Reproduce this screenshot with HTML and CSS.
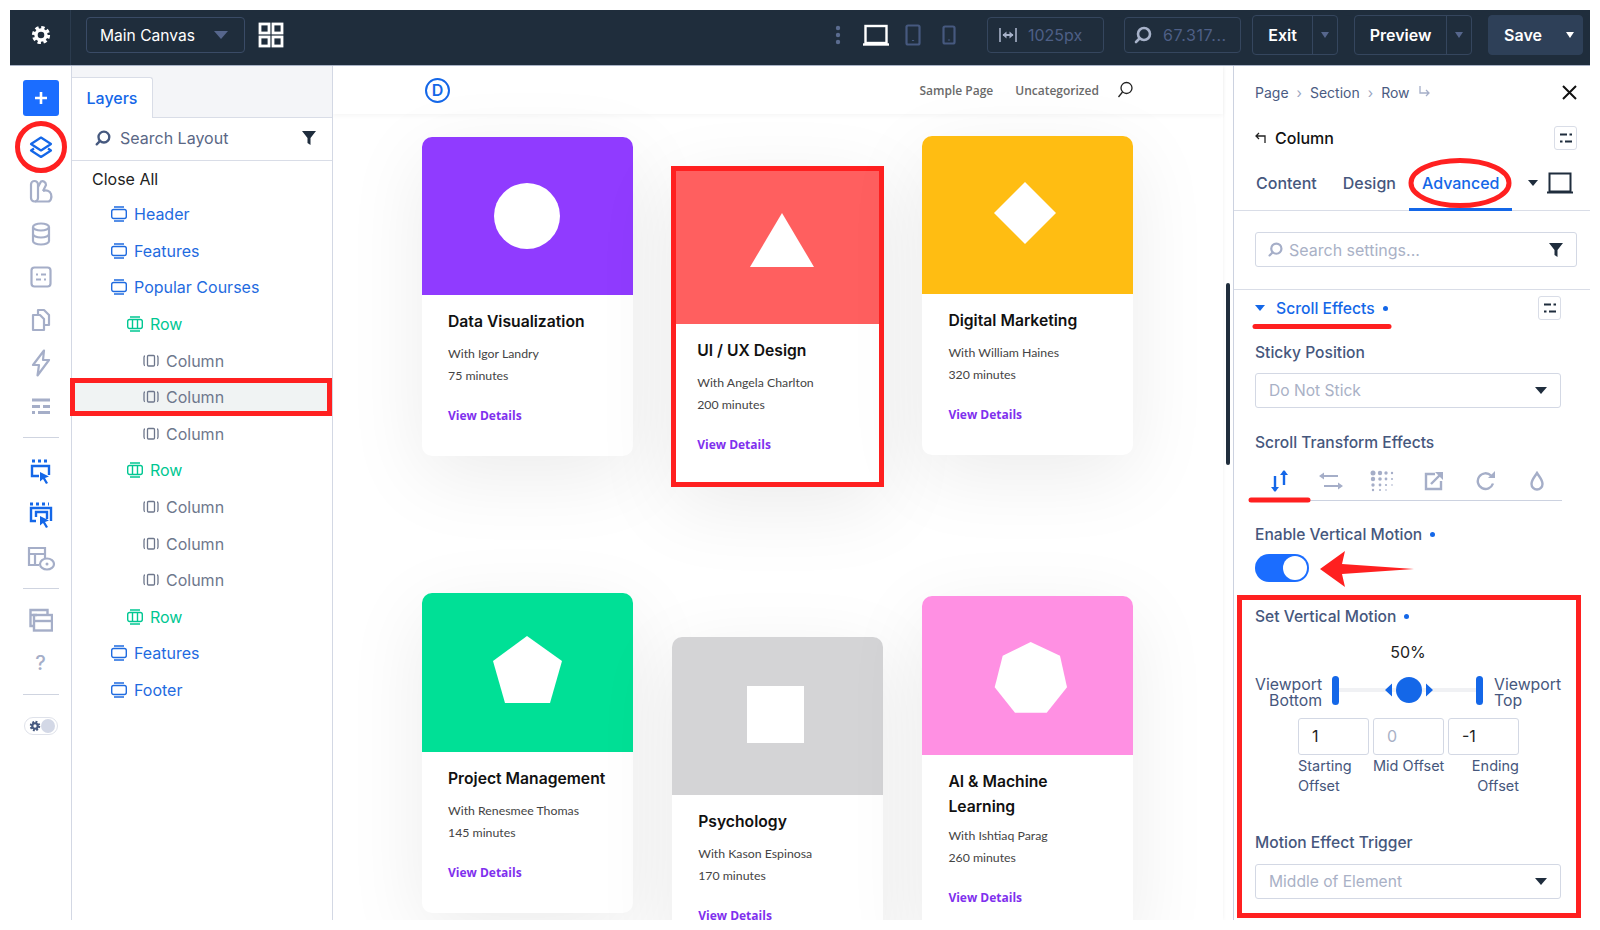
FILE: index.html
```html
<!DOCTYPE html>
<html lang="en">
<head>
    <meta charset="UTF-8">
    <meta name="viewport" content="width=device-width, initial-scale=1.0">
    <title>Main Canvas | Visual Builder</title>
    <link rel="stylesheet" href="styles.css">
</head>
<body>

<div class="app">

    <header class="topbar">
        <div class="gear-cell">
            <svg width="22" height="22" viewBox="0 0 22 22" fill="none" stroke="#fff"><circle cx="11" cy="11" r="7.6" stroke-width="3" stroke-dasharray="3.4 2.57"/><circle cx="11" cy="11" r="5" stroke-width="3.4"/></svg>
        </div>
        <div class="canvas-select">Main Canvas <i class="caret caret-muted"></i></div>
        <svg class="grid-icon" width="26" height="26" viewBox="0 0 26 26" fill="none" stroke="#fff" stroke-width="2.8"><rect x="2" y="2" width="9" height="9"/><rect x="15" y="2" width="9" height="9"/><rect x="2" y="15" width="9" height="9"/><rect x="15" y="15" width="9" height="9"/></svg>

        <div class="topbar-right">
            <svg class="kebab" width="6" height="22" viewBox="0 0 6 22" fill="#5b6c90"><circle cx="3" cy="4" r="2.2"/><circle cx="3" cy="11" r="2.2"/><circle cx="3" cy="18" r="2.2"/></svg>
            <svg class="dev dev-laptop" width="26" height="22" viewBox="0 0 26 22" fill="none" stroke="#fff" stroke-width="2.4"><rect x="2.5" y="2" width="21" height="17"/><path d="M0 20.5h26"/></svg>
            <svg class="dev dev-tablet" width="16" height="22" viewBox="0 0 16 22" fill="none" stroke="#46597f" stroke-width="2.2"><rect x="1.5" y="1.5" width="13" height="19" rx="1.5"/><path d="M8 16v1"/></svg>
            <svg class="dev dev-phone" width="14" height="20" viewBox="0 0 14 20" fill="none" stroke="#46597f" stroke-width="2.2"><rect x="1.5" y="1.5" width="11" height="17" rx="1.5"/><path d="M7 14.5v1"/></svg>

            <div class="value-box box-width">
                <svg width="18" height="16" viewBox="0 0 18 16" fill="none" stroke="#a7b2c9" stroke-width="1.6"><path d="M1 1v14M17 1v14"/><path d="M4 8h10" stroke-width="2"/><path d="M3.5 8l4-3.5v7zM14.5 8l-4-3.5v7z" fill="#a7b2c9" stroke="none"/></svg>
                <span>1025px</span>
            </div>
            <div class="value-box box-zoom">
                <svg width="20" height="20" viewBox="0 0 20 20" fill="none" stroke="#a7b2c9" stroke-width="2.6"><circle cx="11" cy="9" r="6"/><path d="M6.5 13.5L3 17" stroke-linecap="round"/></svg>
                <span>67.317...</span>
            </div>

            <div class="split-btn btn-exit"><span class="btn-label">Exit</span><span class="btn-arrow"><i class="caret caret-small"></i></span></div>
            <div class="split-btn btn-preview"><span class="btn-label">Preview</span><span class="btn-arrow"><i class="caret caret-small"></i></span></div>
            <div class="split-btn btn-save"><span class="btn-label">Save</span><span class="btn-arrow"><i class="caret caret-white"></i></span></div>
        </div>
    </header>

    <div class="workspace">

        <nav class="sidebar">
            <div class="add-btn">
                <svg width="16" height="16" viewBox="0 0 16 16" stroke="#fff" stroke-width="2.6"><path d="M8 2v12M2 8h12"/></svg>
            </div>
            <div class="side-btn side-first">
                <svg width="24" height="24" viewBox="0 0 24 24" fill="none" stroke="#1467e8" stroke-width="2.2" stroke-linejoin="round"><path d="M12 2.500L22 9l-10 6.500L2 9z"/><path d="M5 13.500L2 15.500 12 22l10-6.500-3-2"/></svg>
            </div>
            <div class="side-btn">
                <svg width="24" height="24" viewBox="0 0 24 24" fill="none" stroke="#a5aec8" stroke-width="2.2" stroke-linejoin="round"><path d="M2 5.5a3.500 3.500 0 0 1 7 0V19a3.500 3.500 0 0 1-3.500 3.500A3.500 3.500 0 0 1 2 19z"/><path d="M9 8l3-5.500c2-1 5 .5 5 3.500l-3 6"/><path d="M14 12c3-1.500 7 0 8 3s0 7.500-3 7.500H6"/></svg>
            </div>
            <div class="side-btn">
                <svg width="20" height="24" viewBox="0 0 20 24" fill="none" stroke="#a5aec8" stroke-width="2.2"><ellipse cx="10" cy="5" rx="8" ry="3.5"/><path d="M2 5v14c0 2 3.500 3.500 8 3.500s8-1.500 8-3.500V5"/><path d="M2 12c0 2 3.500 3.500 8 3.500s8-1.500 8-3.500"/></svg>
            </div>
            <div class="side-btn">
                <svg width="22" height="22" viewBox="0 0 22 22" fill="none" stroke="#a5aec8" stroke-width="2.2"><rect x="1.5" y="1.5" width="19" height="19" rx="3"/><path d="M6 8.500h2M11 8.500h5M6 13.500h5M14 13.500h2" stroke-width="1.8"/></svg>
            </div>
            <div class="side-btn">
                <svg width="20" height="24" viewBox="0 0 20 24" fill="none" stroke="#a5aec8" stroke-width="2.2" stroke-linejoin="round"><path d="M7 6V2h6l5 5v10h-5"/><path d="M2 7h7l4 4v11H2z"/></svg>
            </div>
            <div class="side-btn">
                <svg width="20" height="28" viewBox="0 0 20 28" fill="none" stroke="#a5aec8" stroke-width="2.2" stroke-linejoin="round"><path d="M13 1.500L2 16h6l-1.500 10.500L18 11h-6z"/></svg>
            </div>
            <div class="side-btn">
                <svg width="20" height="18" viewBox="0 0 20 18" stroke="#a5aec8" stroke-width="2.8"><path d="M1 3h18M1 9.500h8M12 9.500h7M1 15.500h3M7 15.500h12"/></svg>
            </div>
            <hr class="side-rule rule-a">
            <div class="side-btn">
                <svg width="22" height="28" viewBox="0 0 22 28" fill="none" stroke="#1467e8" stroke-width="2.4"><path d="M2 2h3M8 2h3M14 2h3" stroke-width="3"/><path d="M9 17H2V7h17v9"/><path d="M10 13l9 4.500-4 1.500 3 5-2 1-3-5-3 2.500z" fill="#1467e8" stroke="none"/></svg>
            </div>
            <div class="side-btn">
                <svg width="24" height="28" viewBox="0 0 24 28" fill="none" stroke="#1467e8" stroke-width="2.4"><path d="M1 2h3M7 2h3M13 2h3M19 2h1" stroke-width="3"/><path d="M7 19H2V6h20v13"/><path d="M7 15v-5h11v7"/><path d="M11 14l9 4.500-4 1.500 3 5-2 1-3-5-3 2.500z" fill="#1467e8" stroke="none"/></svg>
            </div>
            <div class="side-btn">
                <svg width="28" height="26" viewBox="0 0 28 26" fill="none" stroke="#a5aec8" stroke-width="2.2"><path d="M12 19H2V2h16v10"/><path d="M2 8h16M8 8v11"/><ellipse cx="20" cy="18" rx="7" ry="5.5" fill="#fff"/><circle cx="20" cy="18" r="1.500" fill="#a5aec8" stroke="none"/></svg>
            </div>
            <hr class="side-rule rule-b">
            <div class="side-btn">
                <svg width="24" height="24" viewBox="0 0 24 24" fill="none" stroke="#a5aec8" stroke-width="2.4"><path d="M5 18H1.500V2h17v5"/><path d="M1.500 7H8"/><rect x="5" y="7" width="18" height="15.5"/><path d="M5 13h18"/></svg>
            </div>
            <div class="side-btn help-mark">?</div>
            <hr class="side-rule rule-c">
            <div class="theme-switch">
                <svg width="12" height="12" viewBox="0 0 22 22" fill="none" stroke="#46597f"><circle cx="11" cy="11" r="7.6" stroke-width="4" stroke-dasharray="3.4 2.57"/><circle cx="11" cy="11" r="5" stroke-width="4"/></svg>
                <i class="theme-knob"></i>
            </div>
        </nav>

        <aside class="layers">
            <div class="layers-tabs"><div class="layers-tab">Layers</div></div>
            <div class="layers-search">
                <svg width="18" height="18" viewBox="0 0 20 20" fill="none" stroke="#46597f" stroke-width="2.6"><circle cx="11" cy="9" r="6"/><path d="M6.500 13.500L3 17" stroke-linecap="round"/></svg>
                <span>Search Layout</span>
                <svg class="filter-icon" width="14" height="14" viewBox="0 0 14 14" fill="#1f2d3d"><path d="M0 0h14L8.500 7v7l-3-2V7z"/></svg>
            </div>
            <ul class="tree">
                <li class="tree-all">Close All</li>
                <li class="tree-item lvl-section"><svg class="ico"><use href="#ico-section"/></svg>Header</li>
                <li class="tree-item lvl-section"><svg class="ico"><use href="#ico-section"/></svg>Features</li>
                <li class="tree-item lvl-section"><svg class="ico"><use href="#ico-section"/></svg>Popular Courses</li>
                <li class="tree-item lvl-row"><svg class="ico"><use href="#ico-row"/></svg>Row</li>
                <li class="tree-item lvl-col"><svg class="ico"><use href="#ico-col"/></svg>Column</li>
                <li class="tree-item lvl-col is-picked"><svg class="ico"><use href="#ico-col"/></svg>Column</li>
                <li class="tree-item lvl-col"><svg class="ico"><use href="#ico-col"/></svg>Column</li>
                <li class="tree-item lvl-row"><svg class="ico"><use href="#ico-row"/></svg>Row</li>
                <li class="tree-item lvl-col"><svg class="ico"><use href="#ico-col"/></svg>Column</li>
                <li class="tree-item lvl-col"><svg class="ico"><use href="#ico-col"/></svg>Column</li>
                <li class="tree-item lvl-col"><svg class="ico"><use href="#ico-col"/></svg>Column</li>
                <li class="tree-item lvl-row"><svg class="ico"><use href="#ico-row"/></svg>Row</li>
                <li class="tree-item lvl-section"><svg class="ico"><use href="#ico-section"/></svg>Features</li>
                <li class="tree-item lvl-section"><svg class="ico"><use href="#ico-section"/></svg>Footer</li>
            </ul>
        </aside>

        <main class="canvas">
            <div class="site">
                <div class="site-head">
                    <div class="site-logo">D</div>
                    <a class="site-link link-first">Sample Page</a>
                    <a class="site-link">Uncategorized</a>
                    <svg class="site-search" width="16" height="18" viewBox="0 0 16 18" fill="none" stroke="#222" stroke-width="1.3"><circle cx="9.500" cy="7" r="5.5"/><path d="M5.500 11L1.500 16"/></svg>
                </div>
                <div class="courses">
                    <div class="course-col">
                        <article class="card card-1">
                            <svg class="thumb" viewBox="0 0 211 158"><rect class="bg-purple" width="211" height="158"/><circle cx="105" cy="79" r="33" fill="#fff"/></svg>
                            <div class="card-body">
                                <h3>Data Visualization</h3>
                                <p>With Igor Landry</p>
                                <p>75 minutes</p>
                                <a class="card-link">View Details</a>
                            </div>
                        </article>
                        <article class="card card-4">
                            <svg class="thumb" viewBox="0 0 211 159"><rect class="bg-green" width="211" height="159"/><polygon points="105,43 140,68 128,110 83,110 71,68" fill="#fff"/></svg>
                            <div class="card-body">
                                <h3>Project Management</h3>
                                <p>With Renesmee Thomas</p>
                                <p>145 minutes</p>
                                <a class="card-link">View Details</a>
                            </div>
                        </article>
                    </div>
                    <div class="course-col">
                        <article class="card card-2">
                            <svg class="thumb" viewBox="0 0 203 153"><rect class="bg-coral" width="203" height="153"/><polygon points="106,42 138,96 74,96" fill="#fff"/></svg>
                            <div class="card-body">
                                <h3>UI / UX Design</h3>
                                <p>With Angela Charlton</p>
                                <p>200 minutes</p>
                                <a class="card-link">View Details</a>
                            </div>
                        </article>
                        <article class="card card-5">
                            <svg class="thumb" viewBox="0 0 211 158"><rect class="bg-grey" width="211" height="158"/><rect x="75" y="49" width="57" height="57" fill="#fff"/></svg>
                            <div class="card-body">
                                <h3>Psychology</h3>
                                <p>With Kason Espinosa</p>
                                <p>170 minutes</p>
                                <a class="card-link">View Details</a>
                            </div>
                        </article>
                    </div>
                    <div class="course-col">
                        <article class="card card-3">
                            <svg class="thumb" viewBox="0 0 211 158"><rect class="bg-amber" width="211" height="158"/><polygon points="103,46 134,77 103,108 72,77" fill="#fff"/></svg>
                            <div class="card-body">
                                <h3>Digital Marketing</h3>
                                <p>With William Haines</p>
                                <p>320 minutes</p>
                                <a class="card-link">View Details</a>
                            </div>
                        </article>
                        <article class="card card-6">
                            <svg class="thumb" viewBox="0 0 211 159"><rect class="bg-pink" width="211" height="159"/><polygon points="108.7,46 138,59.7 145,91.3 124.7,116.7 93,116.7 72.7,91.3 80.7,59.7" fill="#fff"/></svg>
                            <div class="card-body">
                                <h3>AI &amp; Machine Learning</h3>
                                <p>With Ishtiaq Parag</p>
                                <p>260 minutes</p>
                                <a class="card-link">View Details</a>
                            </div>
                        </article>
                    </div>
                </div>
            </div>
            <div class="canvas-gutter"><i class="canvas-thumb"></i></div>
        </main>

        <section class="settings">
            <div class="crumbs">
                <span>Page</span><b>›</b><span>Section</span><b>›</b><span>Row</span>
                <svg class="crumb-turn" width="12" height="12" viewBox="0 0 12 12" fill="none" stroke="#a5aec8" stroke-width="1.3"><path d="M2 0v7h9M8 4l3 3-3 3"/></svg>
                <svg class="close-x" width="15" height="15" viewBox="0 0 15 15" stroke="#111" stroke-width="2"><path d="M1 1l13 13M14 1L1 14"/></svg>
            </div>
            <div class="element-head">
                <svg width="11" height="11" viewBox="0 0 11 11" fill="none" stroke="#222" stroke-width="1.3"><path d="M4 1L1 4l3 3M1 4h9v7"/></svg>
                <span>Column</span>
                <div class="mini-btn"><svg class="ico-sliders"><use href="#ico-sliders"/></svg></div>
            </div>
            <div class="tabs">
                <div class="tab">Content</div>
                <div class="tab">Design</div>
                <div class="tab is-active">Advanced</div>
                <i class="caret caret-dark tabs-caret"></i>
                <svg width="26" height="22" viewBox="0 0 26 22" fill="none" stroke="#1f2d3d" stroke-width="2"><rect x="2.500" y="1.500" width="21" height="18"/><path d="M0 20.500h26"/></svg>
            </div>
            <div class="search-box">
                <svg width="17" height="17" viewBox="0 0 20 20" fill="none" stroke="#a5aec8" stroke-width="2.6"><circle cx="11" cy="9" r="6"/><path d="M6.500 13.500L3 17" stroke-linecap="round"/></svg>
                <span>Search settings...</span>
                <svg class="filter-icon" width="14" height="14" viewBox="0 0 14 14" fill="#1f2d3d"><path d="M0 0h14L8.500 7v7l-3-2V7z"/></svg>
            </div>
            <div class="settings-rule"></div>
            <div class="group-head">
                <i class="caret caret-blue"></i>
                <span>Scroll Effects</span><i class="dot"></i>
                <div class="mini-btn"><svg class="ico-sliders"><use href="#ico-sliders"/></svg></div>
            </div>

            <div class="field-label label-sticky">Sticky Position</div>
            <div class="select-box">Do Not Stick <i class="caret caret-dark"></i></div>

            <div class="field-label label-gap">Scroll Transform Effects</div>
            <div class="effect-row">
                <svg width="24" height="24" viewBox="0 0 24 24" fill="none" stroke="#1467e8" stroke-width="2.4"><path d="M7 7v15M16 2v14"/><path d="M3 18l4 5 4-5zM12 6l4-5 4 5z" fill="#1467e8" stroke="none"/></svg>
                <svg width="24" height="18" viewBox="0 0 24 18" fill="none" stroke="#a5aec8" stroke-width="2.2"><path d="M3 4h16M5 14h16"/><path d="M5 .5L0 4l5 3.500zM19 10.500l5 3.500-5 3.500z" fill="#a5aec8" stroke="none"/></svg>
                <svg width="24" height="22" viewBox="0 0 24 22" fill="#a5aec8"><circle cx="3" cy="3" r="2.500"/><circle cx="10" cy="3" r="2.200"/><circle cx="16" cy="3" r="1.700"/><circle cx="22" cy="3" r="1.200"/><circle cx="3" cy="9" r="2.200"/><circle cx="10" cy="9" r="1.800"/><circle cx="16" cy="9" r="1.400"/><circle cx="22" cy="9" r="1"/><circle cx="3" cy="15" r="1.700"/><circle cx="10" cy="15" r="1.400"/><circle cx="16" cy="15" r="1.100"/><circle cx="22" cy="15" r=".8"/><circle cx="3" cy="20" r="1.200"/><circle cx="10" cy="20" r="1"/><circle cx="16" cy="20" r=".8"/></svg>
                <svg width="20" height="20" viewBox="0 0 20 20" fill="none" stroke="#a5aec8" stroke-width="2.4"><path d="M11 3H2v15h15v-8"/><path d="M7 13L17 3"/><path d="M11 1h8v8z" fill="#a5aec8" stroke="none"/></svg>
                <svg width="20" height="20" viewBox="0 0 20 20" fill="none" stroke="#a5aec8" stroke-width="2.4"><path d="M17 12.500A7.800 7.800 0 1 1 15 4.500"/><path d="M12 7h7V0z" fill="#a5aec8" stroke="none"/></svg>
                <svg width="14" height="20" viewBox="0 0 14 20" fill="none" stroke="#a5aec8" stroke-width="2.4"><path d="M7 2c2.500 4 5.500 7 5.500 11a5.500 5.500 0 0 1-11 0C1.500 9 4.500 6 7 2z"/></svg>
            </div>

            <div class="field-label label-tight">Enable Vertical Motion<i class="dot"></i></div>
            <div class="toggle"><i></i></div>

            <div class="motion-box">
                <div class="field-label">Set Vertical Motion<i class="dot"></i></div>
                <div class="motion-pct">50%</div>
                <div class="motion-slider">
                    <div class="vp-label vp-left">Viewport<br>Bottom</div>
                    <i class="vp-bar"></i>
                    <div class="vp-track">
                        <svg class="vp-knob" width="48" height="28" viewBox="0 0 48 28" fill="#1467e8"><circle cx="24" cy="14" r="13"/><path d="M0 14l7-6.500v13zM48 14l-7-6.500v13z"/></svg>
                    </div>
                    <i class="vp-bar"></i>
                    <div class="vp-label">Viewport<br>Top</div>
                </div>
                <div class="offsets">
                    <div class="offset">
                        <div class="offset-input">1</div>
                        <div class="offset-label">Starting<br>Offset</div>
                    </div>
                    <div class="offset">
                        <div class="offset-input is-empty">0</div>
                        <div class="offset-label">Mid Offset</div>
                    </div>
                    <div class="offset offset-end">
                        <div class="offset-input">-1</div>
                        <div class="offset-label">Ending<br>Offset</div>
                    </div>
                </div>
                <div class="field-label trigger-label">Motion Effect Trigger</div>
                <div class="select-box select-trigger">Middle of Element <i class="caret caret-dark"></i></div>
            </div>
        </section>
    </div>
</div>

<!-- red annotations drawn over the screenshot -->
<svg class="marks" width="1600" height="930" viewBox="0 0 1600 930" fill="none" stroke="#ff2020" stroke-width="5">
    <circle cx="41" cy="147" r="23.5"/>
    <ellipse cx="1460" cy="183" rx="49" ry="22.5"/>
    <path d="M1255 326.500h134" stroke-linecap="round"/>
    <path d="M1251 500h57" stroke-linecap="round"/>
    <path d="M1320 569l25-18-3 13 72 5-72 5 3 13z" fill="#ff2020" stroke="none"/>
</svg>

<svg class="sprites" width="0" height="0">
    <symbol id="ico-section" viewBox="0 0 16 16"><g fill="none" stroke="currentColor" stroke-width="1.4"><rect x=".7" y="3.500" width="14.600" height="9" rx="2"/><path d="M3 1h10M3 15h10"/></g></symbol>
    <symbol id="ico-row" viewBox="0 0 16 16"><g fill="none" stroke="currentColor" stroke-width="1.4"><rect x=".7" y="3.500" width="14.600" height="9" rx="2"/><path d="M3 1h10M3 15h10M5.500 3.500v9M10.500 3.500v9"/></g></symbol>
    <symbol id="ico-col" viewBox="0 0 16 16"><g fill="none" stroke="currentColor" stroke-width="1.3"><rect x="4.500" y="2.500" width="7" height="10.500" rx="1"/><path d="M2 3C1 3 1 3.500 1 4.500v6.500c0 1 0 1.500 1 1.500M14 3c1 0 1 .5 1 1.500v6.500c0 1 0 1.500-1 1.500"/></g></symbol>
    <symbol id="ico-sliders" viewBox="0 0 12 10"><path d="M0 1.500h7M9.500 1.500H12M0 8.500h2.500M5 8.500h7" stroke="currentColor" stroke-width="2"/></symbol>
</svg>

</body>
</html>
```

FILE: styles.css
```css
* {
    box-sizing: border-box;
}

body {
    margin: 0;
    padding: 10px;
    background: #fff;
    font-family: 'Inter', sans-serif;
    color: #111;
}

i {
    display: block;
}

.app {
    width: 1580px;
    height: 910px;
    display: flex;
    flex-direction: column;
    overflow: hidden;
}

.marks {
    position: absolute;
    top: 0;
    left: 0;
    pointer-events: none;
}

.sprites {
    position: absolute;
}

/* carets */
.caret {
    width: 0;
    height: 0;
    border-left: 6px solid transparent;
    border-right: 6px solid transparent;
    border-top: 8px solid #1f2d3d;
}

.caret-muted {
    border-top-color: #56668c;
    border-left-width: 7px;
    border-right-width: 7px;
}

.caret-small {
    border-top-color: #56668c;
    border-left-width: 4px;
    border-right-width: 4px;
    border-top-width: 6px;
}

.caret-white {
    border-top-color: #fff;
    border-left-width: 4px;
    border-right-width: 4px;
    border-top-width: 6px;
}

.caret-dark {
    border-left-width: 6px;
    border-right-width: 6px;
    border-top-width: 7px;
}

.caret-blue {
    border-top-color: #1467e8;
    border-left-width: 5px;
    border-right-width: 5px;
    border-top-width: 6px;
}

/* top bar */
.topbar {
    height: 56px;
    flex: none;
    padding-bottom: 5px;
    display: flex;
    align-items: center;
    background: #1f2d3c;
    border-bottom: 1px solid #a9b3c6;
    color: #fff;
}

.gear-cell {
    width: 61px;
    height: 55px;
    padding: 0 0 5px 2px;
    align-self: flex-start;
    display: flex;
    align-items: center;
    justify-content: center;
    border-right: 1px solid #2b3b4e;
}

.canvas-select {
    width: 159px;
    height: 36px;
    margin-left: 15px;
    padding: 0 16px 0 13px;
    display: flex;
    align-items: center;
    justify-content: space-between;
    border: 1px solid #3a4b66;
    border-radius: 4px;
    font-size: 15.6px;
}

.grid-icon {
    margin-left: 13px;
}

.topbar-right {
    margin-left: auto;
    margin-right: 7px;
    display: flex;
    align-items: center;
}

.dev-laptop {
    margin-left: 22px;
}

.dev-tablet {
    margin-left: 16px;
}

.dev-phone {
    margin-left: 21px;
}

.value-box {
    width: 117px;
    height: 36px;
    padding-left: 11px;
    display: flex;
    align-items: center;
    gap: 11px;
    border: 1px solid #35465e;
    border-radius: 4px;
    color: #4e5f86;
    font-size: 16px;
}

.box-width {
    margin-left: 31px;
}

.box-zoom {
    margin-left: 20px;
    padding-left: 8px;
    gap: 10px;
    letter-spacing: 0.6px;
}

.split-btn {
    height: 40px;
    display: flex;
    align-items: center;
    border: 1px solid #35465e;
    border-radius: 4px;
    font-size: 16px;
    font-weight: 600;
}

.btn-label {
    flex: 1;
    text-align: center;
}

.btn-arrow {
    width: 25px;
    height: 100%;
    display: flex;
    align-items: center;
    justify-content: center;
    border-left: 1px solid #35465e;
}

.btn-exit {
    width: 86px;
    margin-left: 11px;
}

.btn-preview {
    width: 118px;
    margin-left: 16px;
}

.btn-save {
    width: 95px;
    margin-left: 16px;
    background: #2e4058;
    border-color: #2e4058;
}

.btn-save .btn-arrow {
    border-left: none;
}

.workspace {
    flex: 1;
    min-height: 0;
    display: flex;
}

/* left icon column */
.sidebar {
    width: 62px;
    flex: none;
    padding-top: 14px;
    display: flex;
    flex-direction: column;
    align-items: center;
    border-right: 1px solid #d3d8e4;
}

.add-btn {
    width: 36px;
    height: 36px;
    flex: none;
    display: flex;
    align-items: center;
    justify-content: center;
    background: #1b6dff;
    border-radius: 3px;
}

.side-btn {
    width: 100%;
    height: 43px;
    flex: none;
    display: flex;
    align-items: center;
    justify-content: center;
}

.side-first {
    margin: 9px 0 1px;
}

.side-rule {
    width: 36px;
    height: 1px;
    flex: none;
    border: none;
    background: #cfd4e0;
}

.rule-a {
    margin: 10px 0 13px;
}

.rule-b {
    margin: 8px 0 9px;
}

.rule-c {
    margin: 10px 0 22px;
}

.help-mark {
    color: #a5aec8;
    font-size: 20px;
    font-weight: 500;
}

.theme-switch {
    width: 34px;
    height: 18px;
    padding: 0 2px 0 4px;
    display: flex;
    align-items: center;
    justify-content: space-between;
    border: 1px solid #dfe2ea;
    border-radius: 9px;
}

.theme-knob {
    width: 14px;
    height: 14px;
    border-radius: 50%;
    background: #d3d8e6;
}

/* layers panel */
.layers {
    width: 261px;
    flex: none;
    border-right: 1px solid #d3d8e4;
}

.layers-tabs {
    height: 52px;
    padding-top: 11px;
    background: #f4f5f8;
    border-bottom: 1px solid #d9dde7;
}

.layers-tab {
    width: 81px;
    height: 41px;
    line-height: 41px;
    text-align: center;
    background: #fff;
    border: 1px solid #d9dde7;
    border-bottom: none;
    border-left: none;
    border-radius: 0 3px 0 0;
    color: #1467e8;
    font-size: 16px;
    font-weight: 500;
}

.layers-search {
    height: 43px;
    padding: 0 16px 2px 22px;
    display: flex;
    align-items: center;
    gap: 8px;
    border-bottom: 1px solid #d9dde7;
    color: #5a6785;
    font-size: 16px;
}

.filter-icon {
    margin-left: auto;
}

.tree {
    list-style: none;
    margin: 0;
    padding: 0;
}

.tree-all,
.tree-item {
    height: 36.6px;
    display: flex;
    align-items: center;
    font-size: 16px;
}

.tree-all {
    height: 35px;
    padding-left: 20px;
    color: #222;
}

.ico {
    width: 16px;
    height: 16px;
    margin-right: 7px;
    flex: none;
}

.lvl-section {
    padding-left: 39px;
    color: #1f6be0;
}

.lvl-row {
    padding-left: 55px;
    color: #00c792;
}

.lvl-col {
    padding-left: 71px;
    color: #6e778c;
}

.is-picked {
    width: 262px;
    height: 38px;
    margin: -0.7px 0 -0.7px -2px;
    padding-left: 73px;
    background: #f0f3f3;
    outline: 5px solid #ff2020;
    outline-offset: -5px;
}

/* page canvas */
.canvas {
    width: 901px;
    flex: none;
    display: flex;
    overflow: hidden;
    border-right: 1px solid #ccd2e0;
}

.site {
    width: 890px;
    flex: none;
    box-shadow: 0 0 4px rgba(0, 0, 0, 0.06);
}

.site-head {
    height: 48px;
    padding-right: 90px;
    display: flex;
    align-items: center;
    box-shadow: 0 2px 4px rgba(0, 0, 0, 0.04);
    position: relative;
}

.site-logo {
    width: 25px;
    height: 25px;
    margin-left: 92px;
    margin-right: auto;
    border: 2px solid #1467e8;
    border-radius: 50%;
    color: #1467e8;
    font-size: 16px;
    font-weight: 600;
    line-height: 21px;
    text-align: center;
}

.site-link {
    color: #6a6a6a;
    font-family: 'Open Sans', sans-serif;
    font-size: 12px;
    font-weight: 600;
    margin-left: 22px;
}

.site-search {
    margin-left: 18px;
}

.courses {
    padding-left: 89px;
    display: flex;
    gap: 39.2px;
}

.course-col {
    width: 211px;
    flex: none;
}

.card {
    background: #fff;
    border-radius: 10px;
    overflow: hidden;
    box-shadow: 0 20px 80px rgba(0, 0, 0, 0.08);
}

.thumb {
    display: block;
    width: 100%;
}

.bg-purple { fill: #903bff; }
.bg-green { fill: #00e096; }
.bg-coral { fill: #ff5f5f; }
.bg-grey { fill: #d4d4d6; }
.bg-amber { fill: #ffbd12; }
.bg-pink { fill: #ff90e3; }

.card-1 {
    margin-top: 23px;
    height: 319px;
}

.card-4 {
    margin-top: 137px;
    height: 320px;
}

.card-2 {
    width: 213px;
    height: 321px;
    margin: 52px 0 0 -1px;
    border: 5px solid #ff2020;
    border-radius: 0;
}

.card-5 {
    margin-top: 150px;
    height: 320px;
}

.card-3 {
    margin-top: 22px;
    height: 319px;
}

.card-6 {
    margin-top: 141px;
    height: 340px;
}

.card-body {
    padding: 15px 16px 0 26px;
}

.card-2 .card-body {
    padding-left: 21px;
}

.card h3 {
    margin: 0 0 8px;
    color: #111;
    font-family: 'Inter', sans-serif;
    font-size: 15.7px;
    font-weight: 600;
    line-height: 24.5px;
}

.card-6 h3 {
    width: 150px;
    margin-bottom: 6px;
}

.card p {
    margin: 0;
    color: #444;
    font-family: 'Lato', sans-serif;
    font-size: 12.3px;
    line-height: 22px;
}

.card-link {
    display: block;
    margin-top: 20px;
    color: #7f30ee;
    font-family: 'Open Sans', sans-serif;
    font-size: 12px;
    font-weight: 700;
    line-height: 18px;
}

.canvas-gutter {
    flex: 1;
    position: relative;
    padding-left: 3px;
}

.canvas-thumb {
    width: 4px;
    height: 182px;
    margin-top: 217px;
    background: #1f2d3c;
    border-radius: 2px;
}

/* settings panel */
.settings {
    width: 356px;
    flex: none;
    padding: 0 13px 0 21px;
    color: #46577d;
    font-size: 15.6px;
}

.crumbs {
    height: 54px;
    padding-bottom: 2px;
    display: flex;
    align-items: center;
    font-size: 14px;
    color: #4a5b82;
}

.crumbs b {
    margin: 0 8px;
    color: #9aa5bf;
    font-weight: 400;
}

.crumb-turn {
    margin-left: 8px;
}

.close-x {
    margin-left: auto;
}

.element-head {
    height: 35px;
    display: flex;
    align-items: center;
    gap: 9px;
    color: #111;
    font-size: 16px;
    font-weight: 500;
}

.mini-btn {
    width: 23px;
    height: 24px;
    margin-left: auto;
    display: flex;
    align-items: center;
    justify-content: center;
    border: 1px solid #d9dde7;
    border-radius: 3px;
    color: #1f2d3d;
}

.ico-sliders {
    width: 12px;
    height: 10px;
}

.tabs {
    height: 56px;
    margin: 0 -13px 0 -21px;
    padding: 0 17px 0 8px;
    display: flex;
    align-items: center;
    border-bottom: 1px solid #d9dde7;
    font-size: 16px;
    font-weight: 500;
}

.tab {
    height: 100%;
    padding: 0 13px;
    display: flex;
    align-items: center;
    margin-bottom: -1px;
}

.tab:first-child {
    padding-left: 14px;
}

.tab.is-active {
    color: #1467e8;
    border-bottom: 3px solid #1467e8;
    padding-top: 3px;
}

.tabs-caret {
    margin: 0 9px 0 auto;
    border-left-width: 5px;
    border-right-width: 5px;
    border-top-width: 6px;
}

.search-box {
    height: 35px;
    margin-top: 21px;
    padding: 0 13px 0 11px;
    display: flex;
    align-items: center;
    gap: 5px;
    border: 1px solid #d3d8e4;
    border-radius: 3px;
    color: #a9b1c6;
    font-size: 16px;
}

.settings-rule {
    height: 1px;
    margin: 22px -13px 0 -21px;
    background: #d9dde7;
}

.group-head {
    height: 36px;
    padding-right: 16px;
    display: flex;
    align-items: center;
    color: #1467e8;
    font-size: 15.7px;
    font-weight: 500;
}

.group-head .caret {
    margin-right: 11px;
}

.group-head .mini-btn {
    color: #1f2d3d;
}

.dot {
    width: 5px;
    height: 5px;
    margin-left: 8px;
    border-radius: 50%;
    background: #1467e8;
}

.field-label {
    height: 20px;
    margin-top: 14px;
    display: flex;
    align-items: center;
    font-weight: 500;
}

.label-sticky {
    margin-top: 16px;
}

.label-gap {
    margin-top: 24px;
}

.label-tight {
    margin-top: 23px;
}

.select-box {
    width: 306px;
    height: 35px;
    margin-top: 11px;
    padding: 0 13px;
    display: flex;
    align-items: center;
    justify-content: space-between;
    border: 1px solid #d3d8e4;
    border-radius: 3px;
    color: #a9b1c6;
    font-size: 15.6px;
}

.effect-row {
    width: 307px;
    height: 49px;
    padding-top: 10px;
    display: grid;
    grid-template-columns: 50px repeat(5, 51.6px);
    justify-items: center;
    align-items: center;
    border-bottom: 1px solid #ccd2e0;
}

.toggle {
    width: 54px;
    height: 28px;
    margin-top: 10px;
    padding: 2px;
    display: flex;
    justify-content: flex-end;
    background: #1b6dff;
    border-radius: 14px;
}

.toggle i {
    width: 24px;
    height: 24px;
    border-radius: 50%;
    background: #fff;
}

.motion-box {
    width: 344px;
    height: 323px;
    margin: 13px 0 0 -18px;
    padding: 1px 15px 0 13px;
    border: 5px solid #ff2020;
}

.motion-box .field-label {
    margin-top: 5px;
}

.motion-pct {
    margin-top: 16px;
    color: #222;
    font-size: 16px;
    line-height: 20px;
    text-align: center;
}

.motion-slider {
    height: 30px;
    margin-top: 13px;
    display: flex;
    align-items: center;
}

.vp-label {
    flex: none;
    width: 67px;
    font-size: 15.8px;
    line-height: 15.5px;
    padding-top: 5px;
}

.vp-left {
    margin-right: 10px;
    text-align: right;
}

.vp-bar {
    width: 7px;
    height: 29px;
    flex: none;
    background: #1467e8;
    border-radius: 4px;
}

.vp-bar + .vp-label {
    margin-left: 11px;
}

.vp-track {
    flex: 1;
    height: 4px;
    position: relative;
    background: #f0f1f4;
}

.vp-knob {
    position: absolute;
    top: -12px;
    left: 46px;
}

.offsets {
    margin: 13px 0 0 43px;
    display: flex;
    gap: 4px;
}

.offset {
    width: 71px;
    font-size: 14.5px;
    line-height: 20px;
    white-space: nowrap;
}

.offset-end {
    text-align: right;
}

.offset-input {
    height: 37px;
    margin-bottom: 1px;
    padding-left: 13px;
    line-height: 35px;
    text-align: left;
    border: 1px solid #d3d8e4;
    border-radius: 3px;
    color: #222;
    font-size: 16px;
}

.offset-input.is-empty {
    color: #a9b1c6;
}

.motion-box .trigger-label {
    margin-top: 36px;
}

.select-trigger {
    margin-top: 12px;
}
```
